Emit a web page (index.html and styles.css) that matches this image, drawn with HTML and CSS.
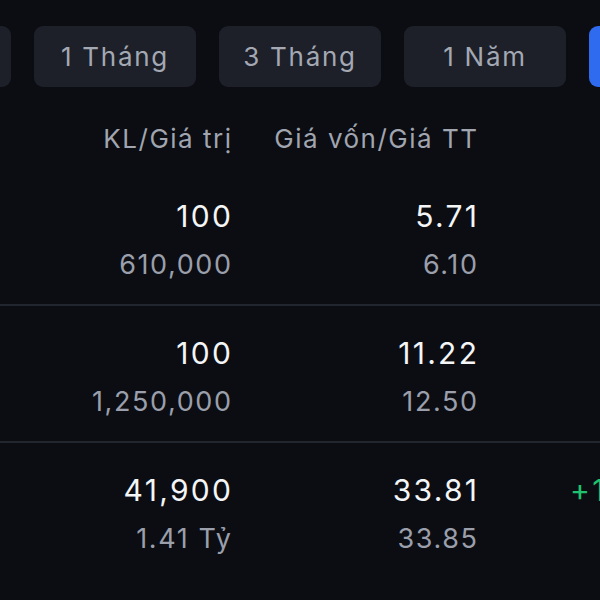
FILE: index.html
```html
<!DOCTYPE html>
<html lang="vi">
<head>
    <meta charset="UTF-8">
    <meta name="viewport" content="width=device-width, initial-scale=1.0">
    <title>Danh mục - Lãi/Lỗ</title>
    <link rel="stylesheet" href="styles.css">
</head>
<body>
<div class="screen">
    <div class="periods">
        <button class="period">1 Tuần</button>
        <button class="period">1 Tháng</button>
        <button class="period">3 Tháng</button>
        <button class="period">1 Năm</button>
        <button class="period active">Tất cả</button>
    </div>

    <div class="table">
        <div class="row head">
            <div class="cell">KL/Giá trị</div>
            <div class="cell">Giá vốn/Giá TT</div>
            <div class="cell left"></div>
        </div>

        <div class="row item">
            <div class="cell">
                <div class="main">100</div>
                <div class="sub">610,000</div>
            </div>
            <div class="cell">
                <div class="main">5.71</div>
                <div class="sub">6.10</div>
            </div>
            <div class="cell left"></div>
        </div>

        <div class="row item">
            <div class="cell">
                <div class="main">100</div>
                <div class="sub">1,250,000</div>
            </div>
            <div class="cell">
                <div class="main">11.22</div>
                <div class="sub">12.50</div>
            </div>
            <div class="cell left"></div>
        </div>

        <div class="row item last">
            <div class="cell">
                <div class="main">41,900</div>
                <div class="sub">1.41 Tỷ</div>
            </div>
            <div class="cell">
                <div class="main">33.81</div>
                <div class="sub">33.85</div>
            </div>
            <div class="cell left">
                <div class="main up">+1</div>
            </div>
        </div>
    </div>
</div>
</body>
</html>
```

FILE: styles.css
```css
html, body {
    margin: 0;
    padding: 0;
    background-color: #0b0d12;
    overflow: hidden;
}

.screen {
    width: 600px;
    height: 600px;
    font-family: Inter, "Noto Sans", sans-serif;
    color: #f2f3f5;
}

.periods {
    display: flex;
    gap: 23px;
    padding-top: 26px;
    margin-left: -151px;
}

.period {
    flex: 0 0 162px;
    height: 61px;
    border: none;
    border-radius: 9px;
    background-color: #1d2029;
    color: #a3a8b3;
    font-family: inherit;
    font-size: 26px;
    letter-spacing: 1.7px;
    padding: 0;
}

.period.active {
    background-color: #2f6bef;
    color: #fff;
}

.table {
    margin-top: 36px;
}

.row {
    display: grid;
    grid-template-columns: 231px 246px 1fr;
}

.cell {
    text-align: right;
    white-space: nowrap;
}

.cell.left {
    text-align: left;
    padding-left: 93px;
}

.head {
    font-size: 26px;
    line-height: 32px;
    letter-spacing: 1.5px;
    color: #a0a5b0;
    margin-bottom: 14px;
}

.head .cell {
    margin-right: -1.5px;
}

.item {
    padding: 29px 0 22px;
    border-bottom: 2px solid #22262e;
}

.item.last {
    border-bottom: none;
}

.main {
    font-size: 30px;
    line-height: 36px;
    letter-spacing: 2.3px;
    margin-right: -2.3px;
    color: #f4f5f7;
}

.sub {
    font-size: 27px;
    line-height: 34px;
    letter-spacing: 1.6px;
    margin-right: -1.6px;
    margin-top: 14px;
    color: #9a9fab;
}

.up {
    color: #1fc26d;
}
```
